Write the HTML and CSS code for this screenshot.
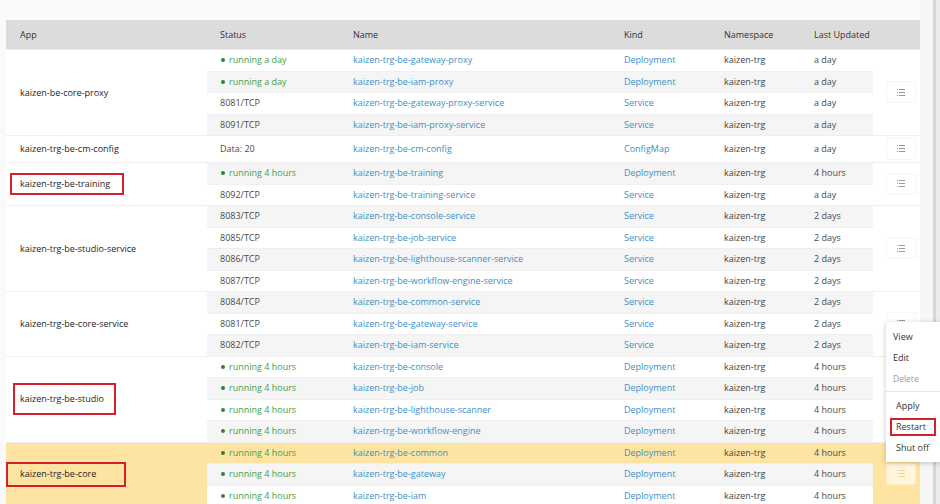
FILE: index.html
```html
<!DOCTYPE html>
<html>
<head>
<meta charset="utf-8">
<link rel="stylesheet" href="styles.css">
</head>
<body>
<div class="page">
<table class="grid">
<colgroup>
<col class="w-app"><col class="w-st"><col class="w-name"><col class="w-kind"><col class="w-ns"><col class="w-up"><col class="w-act">
</colgroup>
<thead>
<tr><th class="app">App</th><th>Status</th><th>Name</th><th>Kind</th><th>Namespace</th><th>Last Updated</th><th></th></tr>
</thead>
<tbody>
<tr class="r"><td class="app" rowspan="4">kaizen-be-core-proxy</td><td class="ok"><span class="dot"></span>running a day</td><td class="lnk">kaizen-trg-be-gateway-proxy</td><td class="lnk">Deployment</td><td class="ns">kaizen-trg</td><td class="up">a day</td><td class="act" rowspan="4"><span class="btn"><svg width="8" height="7" viewBox="0 0 8 7"><g fill="currentColor"><rect x="0" y="0" width="1" height="1"/><rect x="2" y="0" width="6" height="1"/><rect x="0" y="3" width="1" height="1"/><rect x="2" y="3" width="6" height="1"/><rect x="0" y="6" width="1" height="1"/><rect x="2" y="6" width="6" height="1"/></g></svg></span></td></tr>
<tr class="r alt"><td class="ok"><span class="dot"></span>running a day</td><td class="lnk">kaizen-trg-be-iam-proxy</td><td class="lnk">Deployment</td><td class="ns">kaizen-trg</td><td class="up">a day</td></tr>
<tr class="r"><td class="port">8081/TCP</td><td class="lnk">kaizen-trg-be-gateway-proxy-service</td><td class="lnk">Service</td><td class="ns">kaizen-trg</td><td class="up">a day</td></tr>
<tr class="r alt"><td class="port">8091/TCP</td><td class="lnk">kaizen-trg-be-iam-proxy-service</td><td class="lnk">Service</td><td class="ns">kaizen-trg</td><td class="up">a day</td></tr>

<tr class="tall"><td class="app">kaizen-trg-be-cm-config</td><td class="port">Data: 20</td><td class="lnk">kaizen-trg-be-cm-config</td><td class="lnk">ConfigMap</td><td class="ns">kaizen-trg</td><td class="up">a day</td><td class="act"><span class="btn"><svg width="8" height="7" viewBox="0 0 8 7"><g fill="currentColor"><rect x="0" y="0" width="1" height="1"/><rect x="2" y="0" width="6" height="1"/><rect x="0" y="3" width="1" height="1"/><rect x="2" y="3" width="6" height="1"/><rect x="0" y="6" width="1" height="1"/><rect x="2" y="6" width="6" height="1"/></g></svg></span></td></tr>

<tr class="r alt"><td class="app" rowspan="2"><span class="mark mark-training">kaizen-trg-be-training</span></td><td class="ok"><span class="dot"></span>running 4 hours</td><td class="lnk">kaizen-trg-be-training</td><td class="lnk">Deployment</td><td class="ns">kaizen-trg</td><td class="up">4 hours</td><td class="act" rowspan="2"><span class="btn"><svg width="8" height="7" viewBox="0 0 8 7"><g fill="currentColor"><rect x="0" y="0" width="1" height="1"/><rect x="2" y="0" width="6" height="1"/><rect x="0" y="3" width="1" height="1"/><rect x="2" y="3" width="6" height="1"/><rect x="0" y="6" width="1" height="1"/><rect x="2" y="6" width="6" height="1"/></g></svg></span></td></tr>
<tr class="r"><td class="port">8092/TCP</td><td class="lnk">kaizen-trg-be-training-service</td><td class="lnk">Service</td><td class="ns">kaizen-trg</td><td class="up">a day</td></tr>

<tr class="r alt"><td class="app" rowspan="4">kaizen-trg-be-studio-service</td><td class="port">8083/TCP</td><td class="lnk">kaizen-trg-be-console-service</td><td class="lnk">Service</td><td class="ns">kaizen-trg</td><td class="up">2 days</td><td class="act" rowspan="4"><span class="btn"><svg width="8" height="7" viewBox="0 0 8 7"><g fill="currentColor"><rect x="0" y="0" width="1" height="1"/><rect x="2" y="0" width="6" height="1"/><rect x="0" y="3" width="1" height="1"/><rect x="2" y="3" width="6" height="1"/><rect x="0" y="6" width="1" height="1"/><rect x="2" y="6" width="6" height="1"/></g></svg></span></td></tr>
<tr class="r"><td class="port">8085/TCP</td><td class="lnk">kaizen-trg-be-job-service</td><td class="lnk">Service</td><td class="ns">kaizen-trg</td><td class="up">2 days</td></tr>
<tr class="r alt"><td class="port">8086/TCP</td><td class="lnk">kaizen-trg-be-lighthouse-scanner-service</td><td class="lnk">Service</td><td class="ns">kaizen-trg</td><td class="up">2 days</td></tr>
<tr class="r"><td class="port">8087/TCP</td><td class="lnk">kaizen-trg-be-workflow-engine-service</td><td class="lnk">Service</td><td class="ns">kaizen-trg</td><td class="up">2 days</td></tr>

<tr class="r alt"><td class="app" rowspan="3">kaizen-trg-be-core-service</td><td class="port">8084/TCP</td><td class="lnk">kaizen-trg-be-common-service</td><td class="lnk">Service</td><td class="ns">kaizen-trg</td><td class="up">2 days</td><td class="act" rowspan="3"><span class="btn"><svg width="8" height="7" viewBox="0 0 8 7"><g fill="currentColor"><rect x="0" y="0" width="1" height="1"/><rect x="2" y="0" width="6" height="1"/><rect x="0" y="3" width="1" height="1"/><rect x="2" y="3" width="6" height="1"/><rect x="0" y="6" width="1" height="1"/><rect x="2" y="6" width="6" height="1"/></g></svg></span></td></tr>
<tr class="r"><td class="port">8081/TCP</td><td class="lnk">kaizen-trg-be-gateway-service</td><td class="lnk">Service</td><td class="ns">kaizen-trg</td><td class="up">2 days</td></tr>
<tr class="r alt"><td class="port">8082/TCP</td><td class="lnk">kaizen-trg-be-iam-service</td><td class="lnk">Service</td><td class="ns">kaizen-trg</td><td class="up">2 days</td></tr>

<tr class="r"><td class="app" rowspan="4"><span class="mark mark-studio">kaizen-trg-be-studio</span></td><td class="ok"><span class="dot"></span>running 4 hours</td><td class="lnk">kaizen-trg-be-console</td><td class="lnk">Deployment</td><td class="ns">kaizen-trg</td><td class="up">4 hours</td><td class="act" rowspan="4"></td></tr>
<tr class="r alt"><td class="ok"><span class="dot"></span>running 4 hours</td><td class="lnk">kaizen-trg-be-job</td><td class="lnk">Deployment</td><td class="ns">kaizen-trg</td><td class="up">4 hours</td></tr>
<tr class="r"><td class="ok"><span class="dot"></span>running 4 hours</td><td class="lnk">kaizen-trg-be-lighthouse-scanner</td><td class="lnk">Deployment</td><td class="ns">kaizen-trg</td><td class="up">4 hours</td></tr>
<tr class="r alt"><td class="ok"><span class="dot"></span>running 4 hours</td><td class="lnk">kaizen-trg-be-workflow-engine</td><td class="lnk">Deployment</td><td class="ns">kaizen-trg</td><td class="up">4 hours</td></tr>

<tr class="r hov"><td class="app" rowspan="3"><span class="mark mark-core">kaizen-trg-be-core</span></td><td class="ok"><span class="dot"></span>running 4 hours</td><td class="lnk">kaizen-trg-be-common</td><td class="lnk">Deployment</td><td class="ns">kaizen-trg</td><td class="up">4 hours</td><td class="act" rowspan="3"><span class="btn"><svg width="8" height="7" viewBox="0 0 8 7"><g fill="currentColor"><rect x="0" y="0" width="1" height="1"/><rect x="2" y="0" width="6" height="1"/><rect x="0" y="3" width="1" height="1"/><rect x="2" y="3" width="6" height="1"/><rect x="0" y="6" width="1" height="1"/><rect x="2" y="6" width="6" height="1"/></g></svg></span></td></tr>
<tr class="r alt"><td class="ok"><span class="dot"></span>running 4 hours</td><td class="lnk">kaizen-trg-be-gateway</td><td class="lnk">Deployment</td><td class="ns">kaizen-trg</td><td class="up">4 hours</td></tr>
<tr class="r"><td class="ok"><span class="dot"></span>running 4 hours</td><td class="lnk">kaizen-trg-be-iam</td><td class="lnk">Deployment</td><td class="ns">kaizen-trg</td><td class="up">4 hours</td></tr>
</tbody>
</table>
</div>
<div class="sb"></div>

<div class="menu">
<div class="mi">View</div>
<div class="mi">Edit</div>
<div class="mi dis">Delete</div>
<div class="sep"></div>
<div class="mi g2">Apply</div>
<div class="mi g2 res"><span class="resbox">Restart</span></div>
<div class="mi g2">Shut off</div>
</div>
</body>
</html>
```

FILE: styles.css
```css
html, body {
  margin: 0;
  height: 504px;
  overflow: hidden;
}
body {
  background: #fafafa;
  font-family: "Open Sans", "Noto Sans", sans-serif;
  font-size: 9px;
  line-height: 12px;
  color: #333;
  display: flex;
}
.page {
  width: 920px;
  flex: none;
  box-sizing: border-box;
  padding: 20px 0 0 6px;
}
.sb {
  flex: 1;
  background: linear-gradient(to right, #f6f6f6 0 13px, #d6d6d6 13px 16px, #ececec 16px);
}
.grid {
  width: 914px;
  table-layout: fixed;
  border-collapse: collapse;
  background: #fff;
  box-shadow: inset 1px 0 0 #e6e6e6;
}
.w-app { width: 201px; }
.w-st { width: 133px; }
.w-name { width: 271px; }
.w-kind { width: 100px; }
.w-ns { width: 90px; }
.w-up { width: 72px; }
.w-act { width: 47px; }

th {
  height: 28px;
  background: #dcdcdc;
  text-align: left;
  font-weight: 400;
  color: #333;
  padding: 1px 0 0 13px;
  font-size: 9px;
}
th.app { padding-left: 14px; }

tr.r { height: 21.5px; }
tr.tall { height: 27px; }
td {
  padding: 1px 0 0 13px;
  white-space: nowrap;
  overflow: hidden;
  vertical-align: middle;
  box-shadow: inset 0 1px 0 #efefef;
}
td.app {
  padding-left: 14px;
  color: #1e1e1e;
  background: #fff;
  overflow: visible;
}
td.act {
  padding: 0 0 0 13px;
  background: #fff;
}
tr.alt td:not(.app):not(.act) { background: #f5f5f5; }

.ok { color: #45a045; }
.dot {
  display: inline-block;
  width: 4px;
  height: 4px;
  border-radius: 50%;
  background: #2a8a2a;
  margin: 0 4px 1px 1px;
  vertical-align: middle;
}
.lnk { color: #3e8fc6; }
.port { color: #4a4a4a; }
.ns { color: #444; }
.up { color: #4a4a4a; }

.btn {
  width: 30px;
  height: 22px;
  box-sizing: border-box;
  border: 1px solid #f6f6f6;
  border-radius: 2px;
  background: #fff;
  color: #9a9a9a;
  display: flex;
  align-items: center;
  justify-content: center;
}

tr.hov td { background: #fde4a3; }
tr.hov .btn {
  background: #fff6dd;
  border-color: #fcecc0;
  color: #f1d587;
}

.mark {
  display: inline-block;
  border: 2px solid #d3202d;
  line-height: 12px;
}
.mark-training {
  margin-left: -10px;
  padding: 3px 12px 3px 8px;
}
.mark-studio {
  margin-left: -7px;
  padding: 8px 10px 8px 5px;
}
.mark-core {
  margin-left: -14px;
  padding: 4px 28px 5px 12px;
}

.menu {
  position: absolute;
  left: 886px;
  top: 322px;
  width: 56px;
  padding: 4px 0;
  background: #fff;
  box-shadow: 0 1px 5px rgba(0, 0, 0, 0.22);
}
.mi {
  height: 21px;
  line-height: 21px;
  padding-left: 7px;
  color: #333;
  font-size: 9px;
}
.mi.g2 { padding-left: 10px; }
.mi.dis {
  color: #9a9a9a;
  font-size: 8.5px;
}
.sep {
  height: 1px;
  background: #e6e6e6;
  margin: 2px 0 3px;
}
.mi.res {
  padding-left: 4px;
  display: flex;
  align-items: center;
}
.resbox {
  display: inline-block;
  box-sizing: border-box;
  width: 46px;
  height: 18px;
  line-height: 14px;
  border: 2px solid #d3202d;
  padding-left: 4px;
}
```
